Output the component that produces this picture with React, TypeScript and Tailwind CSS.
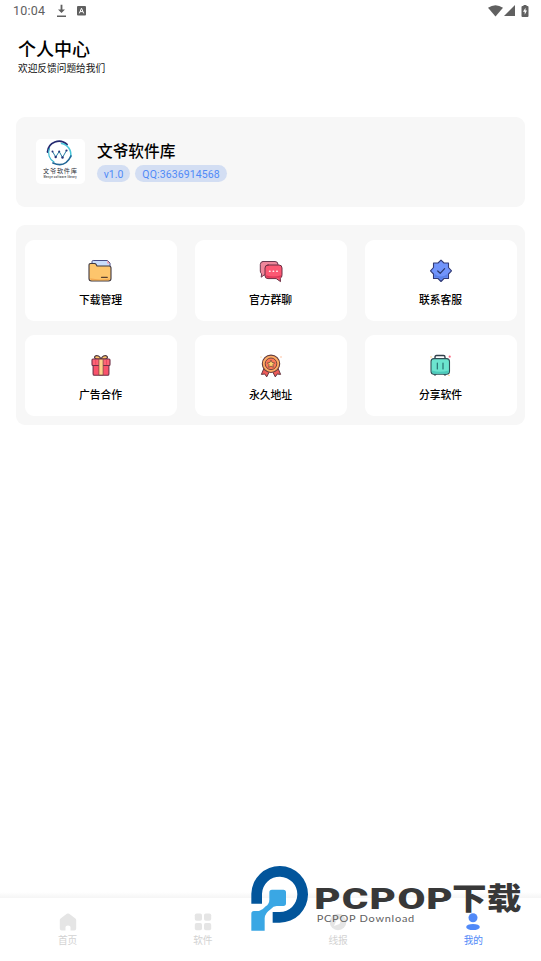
import React from "react";

const cjk = "font-['Roboto','Noto_Sans_CJK_SC',sans-serif]";

function FolderIcon() {
  return (
    <svg className="mr-[3px]" width="26" height="24" viewBox="0 0 26 24" strokeLinejoin="round" strokeLinecap="round">
      <path d="M5 8V2.7Q5 1.5 6.2 1.5H20.5L23 4V10H5Z" fill="#c9dcfb" stroke="#4a4e86" strokeWidth="1" />
      <path d="M20.2 1.5L23 4.5H20.2Z" fill="#f49aa8" />
      <path d="M2 6.2Q2 4.5 3.6 4.5H7.5Q8.6 4.5 9.2 5.6L10 7H22Q24 7 24 9V19.5Q24 22 21.6 22H4.4Q2 22 2 19.5Z" fill="#fdc56c" stroke="#3f3840" strokeWidth="1.1" />
      <path d="M3.2 19.3Q12 21.4 22.8 19.5Q22.8 21.3 21 21.3H5Q3.2 21.3 3.2 19.3Z" fill="#f4a950" />
      <path d="M14.5 18.3H20.3" stroke="#59402f" strokeWidth="1.2" />
    </svg>
  );
}

function ChatIcon() {
  return (
    <svg width="26" height="24" viewBox="0 0 26 24" strokeLinejoin="round" strokeLinecap="round">
      <path d="M5 2.5H17Q20 2.5 20 5.5V13Q20 16 17 16H6L3.2 18.2L3.6 14.8Q2.3 14 2.3 12V5.5Q2.3 2.5 5 2.5Z" fill="#ef879b" stroke="#693b51" strokeWidth="1" />
      <path d="M10 6H21Q24 6 24 9V15.8Q24 18.8 22.2 19.2L22.5 22.6L18.2 19.6H10Q7 19.6 7 16.6V9Q7 6 10 6Z" fill="#fc5873" stroke="#6a2d42" strokeWidth="1" />
      <path d="M8 16.2Q15 18.8 23.2 16.2Q23 18.8 21 18.8H10Q8.2 18.8 8 16.2Z" fill="#dc3656" />
      <path d="M11.6 12.3H12M15.2 12.3H15.6M18.8 12.3H19.2" stroke="#fff0f2" strokeWidth="1.6" />
    </svg>
  );
}

function SupportIcon() {
  return (
    <svg width="26" height="24" viewBox="0 0 26 24" strokeLinejoin="round" strokeLinecap="round">
      <path d="M13 1.2L16 4H20.5V8.5L23.5 11.8L20.5 15V19.5H16L13 22.5L10 19.5H5.5V15L2.5 11.8L5.5 8.5V4H10Z" fill="#7194fb" stroke="#333b76" strokeWidth="1.1" />
      <path d="M6.5 15Q13 20 19.5 15V18.6H15.7L13 21.2L10.3 18.6H6.5Z" fill="#587fe8" />
      <path d="M9.7 12L12.2 14.3L16.6 9.6" fill="none" stroke="#29376c" strokeWidth="1.2" />
    </svg>
  );
}

function GiftIcon() {
  return (
    <svg className="mr-px" width="26" height="24" viewBox="0 0 26 24" strokeLinejoin="round">
      <path d="M13 5Q6 5.4 6.5 3Q7.5 0.8 10.5 2Q12 2.7 13 5Q14 2.7 15.5 2Q18.5 0.8 19.5 3Q20 5.4 13 5Z" fill="#ffc468" stroke="#493440" strokeWidth="1.1" />
      <path d="M5.1 11H20.9V20Q20.9 21.3 19.7 21.3H6.3Q5.1 21.3 5.1 20Z" fill="#fa526b" stroke="#703047" strokeWidth="1.1" />
      <rect x="4" y="5" width="18" height="6.5" rx="1" fill="#fc6577" stroke="#703047" strokeWidth="1.1" />
      <path d="M10.9 5.2H15.1V21H10.9Z" fill="#ffd18c" stroke="#70443c" strokeWidth=".7" />
      <path d="M7.7 6V10.7M18.5 6V10.7" stroke="#ed4861" strokeWidth="1" />
    </svg>
  );
}

function MedalIcon() {
  return (
    <svg width="26" height="24" viewBox="0 0 26 24" strokeLinejoin="round">
      <path d="M6.5 13L3.4 20.4L6.8 20L8.7 22.9L12.2 16H13.8L17.3 22.9L19.2 20L22.6 20.4L19.5 13Z" fill="#ef5b58" stroke="#623641" strokeWidth="1" />
      <circle cx="13" cy="9.8" r="8.7" fill="#ffac63" stroke="#653d3e" strokeWidth="1.1" />
      <circle cx="13" cy="9.8" r="5.8" fill="#fc7858" stroke="#653d3e" strokeWidth=".9" />
      <path d="M13 6.2L14.2 8.5L16.7 8.9L14.9 10.7L15.3 13.3L13 12.1L10.7 13.3L11.1 10.7L9.3 8.9L11.8 8.5Z" fill="#ffd16d" stroke="#633e3b" strokeWidth=".7" />
      <circle cx="3" cy="3" r=".6" fill="#ffc467" /><circle cx="23" cy="3" r=".7" fill="#ffad81" />
    </svg>
  );
}

function SuitcaseIcon() {
  return (
    <svg className="mr-[2px]" width="26" height="24" viewBox="0 0 26 24" strokeLinejoin="round" strokeLinecap="round">
      <path d="M8 5V3Q8 1.5 9.5 1.5H16.5Q18 1.5 18 3V5" fill="none" stroke="#303f4a" strokeWidth="1.4" />
      <path d="M7 20V21H9V20M17 20V21H19V20" fill="#314f56" stroke="#314f56" />
      <rect x="4" y="4.6" width="18.5" height="15.6" rx="3" fill="#6ce4cf" stroke="#314f56" strokeWidth="1.1" />
      <path d="M4.8 16.5Q13 19.2 21.7 16.5V18Q21.5 19.5 20 19.5H6.5Q4.8 19.5 4.8 18Z" fill="#4bcabb" />
      <path d="M10.3 9V15M16 9V15" stroke="#25676a" strokeWidth="1.1" />
      <circle cx="22.7" cy="2.7" r="1.1" fill="#fc647e" /><circle cx="4" cy="3" r=".7" fill="#ffc467" /><circle cx="22" cy="21.4" r=".6" fill="#ffc467" />
    </svg>
  );
}

const tiles = [
  { label: "下载管理", icon: <FolderIcon /> },
  { label: "官方群聊", icon: <ChatIcon /> },
  { label: "联系客服", icon: <SupportIcon /> },
  { label: "广告合作", icon: <GiftIcon /> },
  { label: "永久地址", icon: <MedalIcon /> },
  { label: "分享软件", icon: <SuitcaseIcon /> },
];

function StatusBar() {
  return (
    <header className="flex h-[22px] items-center justify-between pl-[13px] pr-[12px] text-[#606060]">
      <div className="flex items-center">
        <span className="w-[43px] pt-px text-[12.5px] font-normal leading-none tracking-[0.25px]">10:04</span>
        <svg width="11" height="14" viewBox="0 0 11 14" fill="#606060"><path d="M4.6 0.8H6.4V5.5H9L5.5 9L2 5.5H4.6ZM1 11.4H10V12.9H1Z" /></svg>
        <svg className="ml-[10px]" width="9" height="10" viewBox="0 0 9 10"><rect width="9" height="9.5" rx="1" fill="#606060" /><path d="M2.3 7.4L4.5 2.2L6.7 7.4M3.1 5.6H5.9" fill="none" stroke="white" strokeWidth="1" /></svg>
      </div>
      <div className="flex items-center">
        <svg width="15" height="12" viewBox="0 0 15 12" fill="#606060"><path d="M0 2.8Q7.5-2.3 15 2.8L7.5 11.4Z" /></svg>
        <svg className="ml-[1px]" width="11" height="12" viewBox="0 0 11 12" fill="#606060"><path d="M11 0V11H0Z" /></svg>
        <svg className="ml-[6px]" width="8" height="12" viewBox="0 0 8 12"><path d="M2 1H2.5V0H5.5V1H6.5Q7.5 1 7.5 2V11Q7.5 12 6.5 12H1.5Q.5 12 .5 11V2Q.5 1 1.5 1Z" fill="#606060" /><path d="M4.5 2.7L2 6.8H3.7V9.8L6 5.6H4.5Z" fill="white" /></svg>
      </div>
    </header>
  );
}

function AppLogo() {
  return (
    <svg className="size-full" viewBox="0 0 49 45">
      <g fill="none" strokeLinecap="round">
        <path d="M11.5 13A11.5 11.5 0 0 1 31 5.5" stroke="#252a70" strokeWidth="1.8" />
        <path d="M13.5 9.5A10.5 10.5 0 0 0 18 23" stroke="#37b7cf" strokeWidth="1.2" />
        <path d="M25.5 4.5A11 11 0 0 1 34.5 18" stroke="#48c7da" strokeWidth="1.5" />
        <path d="M17 24Q29 29.5 35 17" stroke="#226797" strokeWidth="1.7" />
        <path d="M16.5 12.5L19.7 18L23.2 12.5L26.5 18.5L30.5 11.5" stroke="#287fa4" strokeWidth="1" />
      </g>
      <g fill="#263378"><circle cx="16.5" cy="12.5" r="1" /><circle cx="19.7" cy="18" r="1.2" /><circle cx="23.2" cy="12.5" r="1" /><circle cx="26.5" cy="18.5" r="1.2" /><circle cx="30.5" cy="11.5" r="1.1" /></g>
      <text x="24" y="34" textAnchor="middle" textLength="34" fontSize="6.2" fontWeight="400" fill="#30333b">文爷软件库</text>
      <text x="24" y="38.6" textAnchor="middle" textLength="33" fontSize="2.7" fontWeight="500" fill="#34373b">Wenye software library</text>
    </svg>
  );
}

function NavIcon({ kind }: { kind: string }) {
  if (kind === "home") return <svg width="18" height="18" viewBox="0 0 18 18"><path d="M.8 7Q.8 6 1.6 5.4L7.8.8Q9 0 10.2.8L16.4 5.4Q17.2 6 17.2 7V15.5Q17.2 17.5 15.2 17.5H11.5V14Q11.5 12.5 9 12.5T6.5 14V17.5H2.8Q.8 17.5 .8 15.5Z" fill="#e5e5e5" /></svg>;
  if (kind === "apps") return <svg width="18" height="18" viewBox="0 0 18 18" fill="#e5e5e5"><rect x=".8" y=".5" width="7.2" height="7.2" rx="1.8" /><rect x="10" y=".5" width="7.2" height="7.2" rx="1.8" /><rect x=".8" y="10" width="7.2" height="7.2" rx="1.8" /><rect x="10" y="10" width="7.2" height="7.2" rx="1.8" /></svg>;
  if (kind === "news") return <svg width="18" height="18" viewBox="0 0 18 18"><circle cx="9" cy="9" r="8.3" fill="#e5e5e5" /><path d="M13 5L10.5 11L5 13L7.5 7.3Z" fill="white" /></svg>;
  return <svg width="18" height="18" viewBox="0 0 18 18" fill="#5089f8"><circle cx="9" cy="4.7" r="4.5" /><ellipse cx="9" cy="14" rx="6.8" ry="3.1" /></svg>;
}

function Watermark() {
  return (
    <svg className="pointer-events-none absolute bottom-0 right-0 h-[106px] w-[301px]" viewBox="0 0 903 318">
      <path d="M34 146V116A85 85 0 1 1 119 203H98V171H119A53 53 0 1 0 66 116V146Z" fill="#02559b" />
      <path d="M96 104H130Q138 104 138 112V145Q138 153 130 153H110Q100 153 92 163Q75 174 74 190V227H34V176Q34 168 42 168H57Q68 166 77 154Q88 147 88 134V112Q88 104 96 104Z" fill="#3aa7e4" />
      <g transform="scale(1.35 1)">
        <text x="165 226 288 350 414" y="161" fontFamily="Roboto, sans-serif" fontSize="90" fontWeight="900" fill="#383838">PCPOP</text>
      </g>
      <text x="636" y="162" textLength="208" lengthAdjust="spacingAndGlyphs" fontFamily="Noto Sans CJK SC, sans-serif" fontSize="90" fontWeight="900" fill="#383838">下载</text>
      <text x="230" y="202" textLength="295" lengthAdjust="spacingAndGlyphs" letterSpacing="2" fontFamily="Lato, sans-serif" fontSize="29" fill="#606060">PCPOP Download</text>
    </svg>
  );
}

export default function App() {
  return (
    <div className={`${cjk} relative flex h-[961px] w-[541px] flex-col overflow-hidden bg-white text-black`}>
      <StatusBar />
      <section className="h-[95px] px-[18px] pt-[16px]">
        <h1 className="text-[18px] font-medium leading-[23px]">个人中心</h1>
        <p className="text-[9.7px] leading-[15px] text-[#111111]">欢迎反馈问题给我们</p>
      </section>
      <main className="flex flex-1 flex-col gap-[18px] px-4">
        <section className="flex h-[90px] w-[509px] shrink-0 items-start rounded-[9px] bg-[#f7f7f7] pl-5 pt-[22px]">
          <div className="h-[45px] w-[49px] overflow-hidden rounded-[5px] bg-white"><AppLogo /></div>
          <div className="ml-3 flex h-[45px] flex-col">
            <h2 className="pt-px text-[15.7px] font-medium leading-[24px]">文爷软件库</h2>
            <div className="mt-px flex gap-[5px] text-[10.5px] leading-[17px] text-[#508af7]">
              <span className="h-[17px] w-[33px] rounded-full bg-[#d3def3] pt-px text-center leading-[17px]">v1.0</span>
              <span className="h-[17px] w-[92px] rounded-full bg-[#d3def3] pt-px text-center leading-[17px] tracking-[0.1px]">QQ:3636914568</span>
            </div>
          </div>
        </section>
        <section className="grid h-[200px] w-[509px] shrink-0 grid-cols-3 gap-x-[18px] gap-y-[14px] rounded-[9px] bg-[#f7f7f7] pb-[9px] pl-[9px] pr-[8px] pt-[15px]">
          {tiles.map((tile) => (
            <button key={tile.label} className="flex h-[81px] flex-col items-center rounded-[9px] bg-white pt-[19px]">
              {tile.icon}
              <span className="mr-px mt-[9px] text-[10.8px] font-medium leading-[17px]">{tile.label}</span>
            </button>
          ))}
        </section>
      </main>
      <div className="h-[6px] bg-gradient-to-b from-white to-[#f5f5f5]" />
      <nav className="grid h-[63px] grid-cols-4 bg-white text-[9.7px] text-[#d2d2d2]">
        {[["home", "首页"], ["apps", "软件"], ["news", "线报"], ["user", "我的"]].map(([kind, label]) => (
          <div key={kind} className="flex flex-col items-center pt-[15px]">
            <NavIcon kind={kind} />
            <span className={`${kind === "user" ? "text-[#5089f8]" : ""} mt-px leading-[17px]`}>{label}</span>
          </div>
        ))}
      </nav>
      <Watermark />
    </div>
  );
}
